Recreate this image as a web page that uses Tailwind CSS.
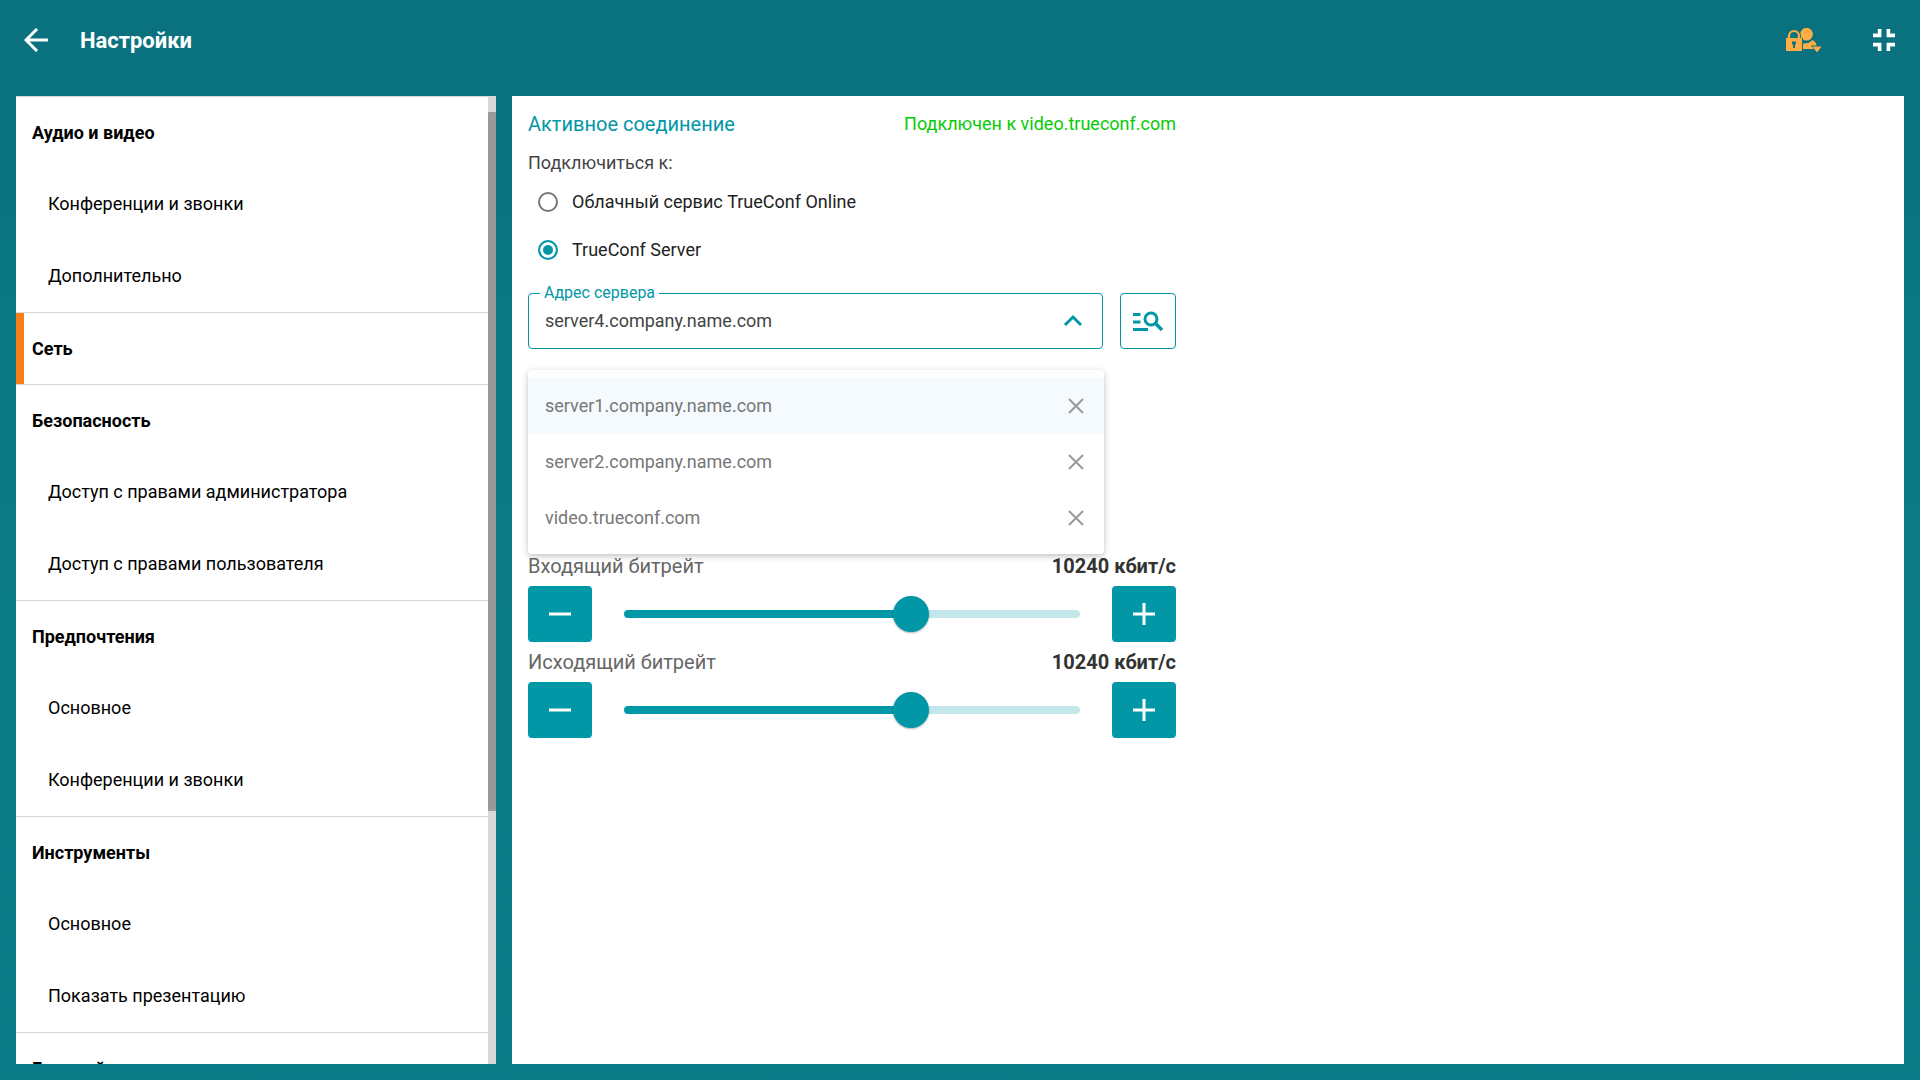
<!DOCTYPE html>
<html lang="ru">
<head>
<meta charset="utf-8">
<meta name="viewport" content="width=device-width, initial-scale=1">
<title>Настройки</title>
<script src="https://cdn.jsdelivr.net/npm/@tailwindcss/browser@4"></script>
</head>
<body class="flex h-screen flex-col bg-linear-to-b from-[#09727e] from-10% via-[#0a7984] via-35% to-[#0a7c87] font-['Roboto',sans-serif] text-lg leading-6 text-black">
<header class="flex h-20 shrink-0 items-center px-6">
  <button type="button" aria-label="Назад" class="text-white">
    <svg class="size-6" viewBox="0 0 24 24" fill="none" stroke="currentColor" stroke-width="3"><path d="M13 1 2 12l11 11M2 12h22"/></svg>
  </button>
  <h1 class="ml-8 pt-px text-[22px] font-bold text-white">Настройки</h1>
  <button type="button" aria-label="Права доступа" class="ml-auto text-[#ffac45]">
    <svg class="h-6 w-9" viewBox="0 0 36 24" fill="currentColor">
      <circle cx="20.500" cy="6.200" r="6.300"/>
      <path d="M16.500 21v-5.500q6.500.5 10-3.500 4 2 4 6v3z"/>
      <path d="M25 17.500h12l-6 7.500z" fill="#09737f"/><path d="M26.500 18.500h9l-4.500 6z"/>
      <path d="M1 10V8.500a7 7.500 0 0 1 14 0V10h2v14H0z" fill="#09737f"/>
      <path d="M0 10h16v13H0z"/>
      <path d="M3 10.500V8a5 5 0 0 1 10 0v2.500" fill="none" stroke="currentColor" stroke-width="2.200"/>
      <path d="M6 13.500h4v3H9V20H7v-3.500H6z" fill="#09737f"/>
    </svg>
  </button>
  <button type="button" aria-label="Выйти из полноэкранного режима" class="ml-[50px] text-white">
    <svg class="size-6" viewBox="0 0 24 24" fill="none" stroke="currentColor" stroke-width="3.600"><path d="M7.600 1v6.400H1M16.400 1v6.400H23M7.600 23v-6.400H1M16.400 23v-6.400H23"/></svg>
  </button>
</header>
<div class="flex min-h-0 flex-1 gap-4 p-4">
  <div class="flex w-[480px] shrink-0 bg-white">
    <nav aria-label="Разделы" class="flex-1 overflow-hidden">
      <section class="border-t border-[#d8d8d8]">
        <a href="#" class="flex h-[71px] items-center px-4 font-bold">Аудио и видео</a>
        <a href="#" class="flex h-[72px] items-center px-8">Конференции и звонки</a>
        <a href="#" class="flex h-[72px] items-center px-8">Дополнительно</a>
      </section>
      <section class="border-t border-[#d8d8d8]">
        <a href="#" aria-current="page" class="flex h-[71px] items-center border-l-8 border-[#f77f17] px-2 font-bold">Сеть</a>
      </section>
      <section class="border-t border-[#d8d8d8]">
        <a href="#" class="flex h-[71px] items-center px-4 font-bold">Безопасность</a>
        <a href="#" class="flex h-[72px] items-center px-8">Доступ с правами администратора</a>
        <a href="#" class="flex h-[72px] items-center px-8">Доступ с правами пользователя</a>
      </section>
      <section class="border-t border-[#d8d8d8]">
        <a href="#" class="flex h-[71px] items-center px-4 font-bold">Предпочтения</a>
        <a href="#" class="flex h-[72px] items-center px-8">Основное</a>
        <a href="#" class="flex h-[72px] items-center px-8">Конференции и звонки</a>
      </section>
      <section class="border-t border-[#d8d8d8]">
        <a href="#" class="flex h-[71px] items-center px-4 font-bold">Инструменты</a>
        <a href="#" class="flex h-[72px] items-center px-8">Основное</a>
        <a href="#" class="flex h-[72px] items-center px-8">Показать презентацию</a>
      </section>
      <section class="border-t border-[#d8d8d8]">
        <a href="#" class="flex h-[71px] items-center px-4 font-bold">Главный</a>
      </section>
    </nav>
    <div aria-hidden="true" class="flex w-2 flex-col bg-[#d8d8d8] pt-4"><div class="h-[73.4%] rounded-[1px] bg-[#999]"></div></div>
  </div>
  <main class="flex-1 bg-white p-4">
    <form class="w-[648px]">
      <div class="flex items-center justify-between">
        <h2 class="text-xl leading-6 text-[#0297a7]">Активное соединение</h2>
        <p class="text-[#05cc05]">Подключен к video.trueconf.com</p>
      </div>
      <fieldset>
        <legend class="pt-[15px] text-[#444]">Подключиться к:</legend>
        <label class="flex h-12 items-center gap-[14px] pt-1.5 pl-[10px] text-[#222]"><input type="radio" name="target" class="size-5 appearance-none rounded-full border-2 border-[#777]">Облачный сервис TrueConf Online</label>
        <label class="flex h-12 items-center gap-[14px] pt-1.5 pl-[10px] text-[#222]"><input type="radio" name="target" checked class="size-5 appearance-none rounded-full border-2 border-[#0297a7] bg-[#0297a7] ring-3 ring-white ring-inset">TrueConf Server</label>
      </fieldset>
      <div class="relative mt-[22px] flex justify-between">
        <div class="relative flex h-14 w-[575px] items-center rounded border border-[#0297a7] pr-[17px] pl-4">
          <label for="server" class="absolute -top-[13px] left-[11px] bg-white px-1 text-base leading-6 text-[#0297a7]">Адрес сервера</label>
          <input id="server" type="text" value="server4.company.name.com" class="min-w-0 flex-1 text-[#444] outline-none">
          <button type="button" aria-label="Свернуть список" class="text-[#0297a7]"><svg class="size-6" viewBox="0 0 24 24" fill="none" stroke="currentColor" stroke-width="3"><path d="m4 16 8-8 8 8"/></svg></button>
        </div>
        <button type="button" aria-label="Найти сервер" class="flex size-14 items-center justify-center rounded border border-[#0297a7] text-[#0297a7]">
          <svg class="h-[22px] w-[30px]" viewBox="0 0 30 22" fill="none" stroke="currentColor" stroke-width="3"><path d="M0 4.500h7.500M0 12h7.500M0 19.500h15"/><circle cx="18" cy="9" r="6"/><path d="m22 13 7 7" stroke-width="3.400"/></svg>
        </button>
        <ul class="absolute top-[77px] left-0 z-10 w-[576px] rounded bg-white py-2 text-[#777] shadow-[0_2px_6px_rgba(0,0,0,0.25)]">
          <li class="flex h-14 items-center justify-between bg-[#f4fafd] pr-5 pl-[17px]">server1.company.name.com<button type="button" aria-label="Удалить" class="text-[#999]"><svg class="size-4" viewBox="0 0 16 16" fill="none" stroke="currentColor" stroke-width="2"><path d="m1 1 14 14M15 1 1 15"/></svg></button></li>
          <li class="flex h-14 items-center justify-between pr-5 pl-[17px]">server2.company.name.com<button type="button" aria-label="Удалить" class="text-[#999]"><svg class="size-4" viewBox="0 0 16 16" fill="none" stroke="currentColor" stroke-width="2"><path d="m1 1 14 14M15 1 1 15"/></svg></button></li>
          <li class="flex h-14 items-center justify-between pr-5 pl-[17px]">video.trueconf.com<button type="button" aria-label="Удалить" class="text-[#999]"><svg class="size-4" viewBox="0 0 16 16" fill="none" stroke="currentColor" stroke-width="2"><path d="m1 1 14 14M15 1 1 15"/></svg></button></li>
        </ul>
      </div>
      <div class="mt-[197px] flex h-10 items-center justify-between text-xl leading-6"><label for="incoming" class="text-[#666]">Входящий битрейт</label><output for="incoming" class="font-bold text-[#333]">10240 кбит/с</output></div>
      <div class="flex items-center">
        <button type="button" aria-label="Уменьшить входящий битрейт" class="flex h-14 w-16 items-center justify-center rounded bg-[#0297a7] text-white"><svg class="size-6" viewBox="0 0 24 24" fill="none" stroke="currentColor" stroke-width="3"><path d="M1 12h22"/></svg></button>
        <input id="incoming" type="range" min="0" max="100" value="64" style="background-image:linear-gradient(to right,#0297a7 64%,#c2e6e9 64%)" class="mx-8 h-2 min-w-0 flex-1 appearance-none rounded-full [&::-webkit-slider-thumb]:size-9 [&::-webkit-slider-thumb]:appearance-none [&::-webkit-slider-thumb]:rounded-full [&::-webkit-slider-thumb]:bg-[#0297a7] [&::-webkit-slider-thumb]:shadow-[0_1px_2px_rgba(0,0,0,0.3)]">
        <button type="button" aria-label="Увеличить входящий битрейт" class="flex h-14 w-16 items-center justify-center rounded bg-[#0297a7] text-white"><svg class="size-6" viewBox="0 0 24 24" fill="none" stroke="currentColor" stroke-width="3"><path d="M1 12h22M12 1v22"/></svg></button>
      </div>
      <div class="flex h-10 items-center justify-between text-xl leading-6"><label for="outgoing" class="text-[#666]">Исходящий битрейт</label><output for="outgoing" class="font-bold text-[#333]">10240 кбит/с</output></div>
      <div class="flex items-center">
        <button type="button" aria-label="Уменьшить исходящий битрейт" class="flex h-14 w-16 items-center justify-center rounded bg-[#0297a7] text-white"><svg class="size-6" viewBox="0 0 24 24" fill="none" stroke="currentColor" stroke-width="3"><path d="M1 12h22"/></svg></button>
        <input id="outgoing" type="range" min="0" max="100" value="64" style="background-image:linear-gradient(to right,#0297a7 64%,#c2e6e9 64%)" class="mx-8 h-2 min-w-0 flex-1 appearance-none rounded-full [&::-webkit-slider-thumb]:size-9 [&::-webkit-slider-thumb]:appearance-none [&::-webkit-slider-thumb]:rounded-full [&::-webkit-slider-thumb]:bg-[#0297a7] [&::-webkit-slider-thumb]:shadow-[0_1px_2px_rgba(0,0,0,0.3)]">
        <button type="button" aria-label="Увеличить исходящий битрейт" class="flex h-14 w-16 items-center justify-center rounded bg-[#0297a7] text-white"><svg class="size-6" viewBox="0 0 24 24" fill="none" stroke="currentColor" stroke-width="3"><path d="M1 12h22M12 1v22"/></svg></button>
      </div>
    </form>
  </main>
</div>
</body>
</html>
